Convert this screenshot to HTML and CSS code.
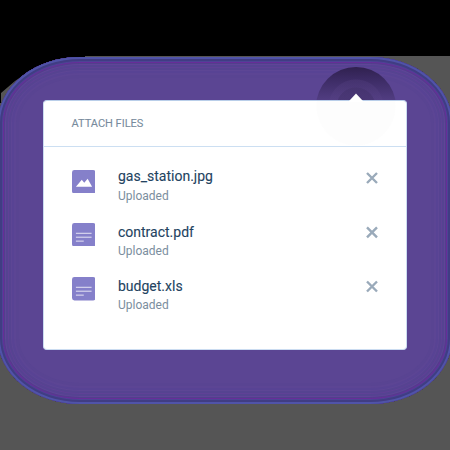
FILE: index.html
```html
<!DOCTYPE html>
<html lang="en">
<head>
<meta charset="utf-8">
<title>Attach files</title>
<link rel="stylesheet" href="styles.css">
</head>
<body>
<svg class="backdrop" viewBox="0 0 450 450" aria-hidden="true">
  <path d="M0 0H450V56H85V57.5C60 59 42 64 28 72L15 81L1 93V103H0Z" fill="#000"/>
</svg>
<main class="halo">
  <div class="trigger"></div>
  <section class="card">
    <svg class="pointer" viewBox="0 0 14 9" aria-hidden="true"><path d="M0 9V8L7 .5L14 8V9Z" fill="#fff"/></svg>
    <header class="card-header"><h1 class="title">ATTACH FILES</h1></header>
    <ul class="files">
      <li class="file">
        <svg class="icon" viewBox="0 0 24 24"><rect width="24" height="24" rx="2.5" fill="#8580ca"/><path d="M4 17L10 10L12.5 13L16 9L20.5 17Z" fill="#fff"/></svg>
        <div class="info"><div class="name">gas_station.jpg</div><div class="status">Uploaded</div></div>
        <svg class="remove" viewBox="0 0 12 12"><path d="M1 1L11 11M11 1L1 11"/></svg>
      </li>
      <li class="file">
        <svg class="icon" viewBox="0 0 24 24"><rect width="24" height="24" rx="2.5" fill="#8580ca"/><path d="M4 10.5H20M4 14.5H20M4 18.5H12" stroke="#e8e6f5"/></svg>
        <div class="info"><div class="name">contract.pdf</div><div class="status">Uploaded</div></div>
        <svg class="remove" viewBox="0 0 12 12"><path d="M1 1.3L11 11.3M11 1.3L1 11.3"/></svg>
      </li>
      <li class="file">
        <svg class="icon" viewBox="0 0 24 24"><rect width="24" height="24" rx="2.5" fill="#8580ca"/><path d="M4 10.5H20M4 14.5H20M4 18.5H12" stroke="#e8e6f5"/></svg>
        <div class="info"><div class="name">budget.xls</div><div class="status">Uploaded</div></div>
        <svg class="remove" viewBox="0 0 12 12"><path d="M1 1.5L11 11.5M11 1.5L1 11.5"/></svg>
      </li>
    </ul>
  </section>
</main>
</body>
</html>
```

FILE: styles.css
```css
* { box-sizing: border-box; }
body {
  margin: 0;
  height: 450px;
  padding-top: 57px;
  overflow: hidden;
  background: #555;
  font-family: Roboto, "Liberation Sans", sans-serif;
}
.backdrop { position: absolute; inset: 0; width: 450px; height: 450px; }
.halo {
  position: relative;
  height: 347px;
  margin: 0 -2px;
  padding: 43px 45px;
  border-radius: 82px / 66px;
  background: #5b4593;
  box-shadow:
    inset 0 0 0 2px #5053a8,
    inset 0 0 0 4px #403d83,
    inset 0 0 0 5px #4e4395,
    inset 0 0 0 6px #672d98,
    inset 0 0 0 7px #51408b,
    inset 0 0 0 8px #604498,
    inset 0 0 0 10px #554391,
    inset 0 0 0 11px #5f4196,
    inset 0 0 0 13px #564391,
    inset 0 0 0 14px #5d4695,
    inset 0 0 0 16px #584394,
    inset 0 0 0 18px #5c4594,
    inset 0 0 0 21px #594492;
}
.trigger {
  position: absolute;
  left: 318px;
  top: 10px;
  width: 80px;
  height: 80px;
  border-radius: 50%;
  background:
    radial-gradient(circle, rgba(65, 48, 105, .5) 19px, transparent 20px),
    radial-gradient(circle, rgba(90, 68, 135, .28) 27px, transparent 28px),
    linear-gradient(#30214f, #3c2b64 12px, #503c80 32px, #574288 36px);
}
.card {
  position: relative;
  width: 364px;
  height: 250px;
  border: 1px solid #cbdcf1;
  border-top-color: #b9cee9;
  border-radius: 4px;
  background: #fff;
}
.pointer { position: absolute; left: 305px; top: -8px; width: 14px; height: 9px; }
.card-header {
  height: 46px;
  padding: 0 27.5px;
  border-bottom: 1px solid #ccdff2;
  border-radius: 3px 3px 0 0;
  background: radial-gradient(circle at 312px 5px, #fdfdfd 39px, transparent 40px);
}
.title { margin: 0; font-size: 11px; line-height: 45px; font-weight: 400; color: #788b9d; -webkit-text-stroke: .1px; }
.files { margin: 0; padding: 20px 27px 0; list-style: none; }
.file { display: flex; align-items: flex-start; height: 54px; }
.file:first-child { height: 55px; }
.icon { width: 23.5px; height: 23.5px; margin: 2.5px 24px 0 .5px; flex: none; }
.file:not(:first-child) .icon { margin-top: .5px; }
.file:last-child .icon { margin-top: 1px; }
.info { flex: 1; margin-left: -1px; }
.name { font-size: 14px; line-height: 18px; color: #234361; -webkit-text-stroke: .1px; }
.file:not(:first-child) .name { padding-top: 1px; }
.status { padding-top: 4px; font-size: 12px; line-height: 14px; color: #7b8e9e; }
.file:not(:first-child) .status { padding-top: 3px; }
.remove { width: 12px; height: 12px; margin: 5px 1px 0 0; fill: none; stroke: #9aaaba; stroke-width: 2.4; overflow: visible; }
.file:not(:first-child) .remove { margin-top: 4px; }
```
